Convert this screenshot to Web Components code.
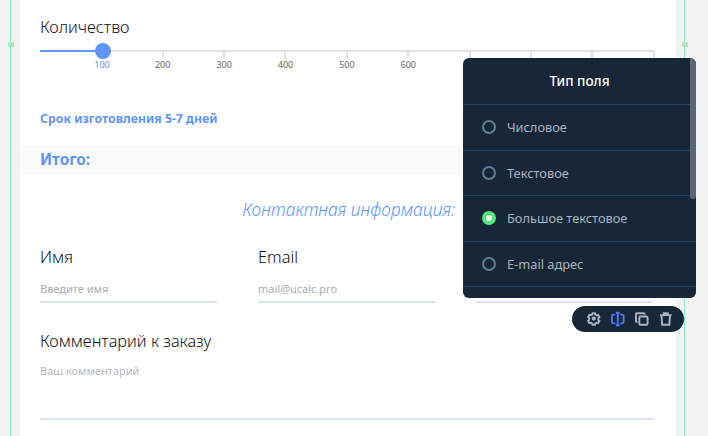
<!DOCTYPE html>
<html lang="ru"><head><meta charset="utf-8"><title>Форма</title>
<style>
html,body{margin:0;padding:0;height:436px;overflow:hidden;background:#f4f4f4}
body{font-family:"Noto Sans","Open Sans",sans-serif;position:relative}
</style></head><body>
<form-canvas></form-canvas>
<script>
function def(name,html,init){
  customElements.define(name,class extends HTMLElement{
    constructor(){super();this.attachShadow({mode:'open'}).innerHTML=typeof html==='function'?html(this):html;}
    connectedCallback(){if(init)init(this)}
  });
}
const F='"Noto Sans","Open Sans",sans-serif';
def('field-label',`<style>:host{display:block;font:300 16.35px/22px ${F};color:#111}</style><slot></slot>`);
def('range-slider',()=>{
  const v=[200,300,400,500,600,'','','',''];
  const ticks=v.map(x=>`<div class="t"><i></i><span>${x}</span></div>`).join('');
  return `<style>
  :host{display:block;height:47px}
  .track{display:flex;height:2px;background:#e2e2e2;position:relative}
  .fill{position:absolute;left:0;top:0;height:2px;width:63px;background:#5f95fb}
  .knob{position:absolute;left:55px;top:-7px;width:16px;height:16px;border-radius:50%;background:#5f95fb}
  .labels{display:flex;padding-left:62.3px}
  .t{width:61.4px;height:20px;text-align:right;position:relative;flex:none}
  .t i{position:absolute;right:0;top:0;width:2px;height:6px;background:#e2e2e2}
  .t span{position:absolute;right:-19px;width:40px;text-align:center;top:7px;font:400 9px/12px ${F};color:#666}
  .first{position:absolute;left:42px;width:40px;text-align:center;top:9px;font:400 9px/12px ${F};color:#5f95fb}
  .wrap{position:relative}
  </style><div class="wrap"><div class="track"><div class="fill"></div><div class="knob"></div></div>
  <span class="first">100</span><div class="labels">${ticks}</div></div>`;
});
def('text-field',el=>`<style>
  :host{display:block}
  .p{display:block;font:400 11px/15px ${F};color:#a9adb2;margin-top:13px;height:20px;border-bottom:2px solid #dce4ef}
  </style><field-label><slot></slot></field-label><div class="p">${el.getAttribute('placeholder')}</div>`);
def('radio-row',el=>`<style>
  :host{display:flex;align-items:center;height:44.5px;padding-left:19px;border-bottom:1px solid #26425c;gap:11px;font:400 12.8px/16px ${F};color:#a9b3bf}
  .r{width:14px;height:14px;box-sizing:border-box;border-radius:50%;border:2px solid #5a7f9f;flex:none}
  :host([checked]) .r{border:none;background:#52e878;position:relative}
  :host([checked]) .r::after{content:"";position:absolute;left:4px;top:4px;width:6px;height:6px;border-radius:50%;background:#fff}
  </style><div class="r"></div><slot></slot>`);
def('type-popup',`<style>
  :host{position:absolute;left:463px;top:58px;width:233px;height:240px;background:#172737;border-radius:6px;overflow:hidden;display:block}
  h3{margin:0;height:47px;box-sizing:border-box;border-bottom:1px solid #26425c;font:500 13.5px/47px ${F};color:#fff;text-align:center}
  .bar{position:absolute;right:0;top:0;width:6px;height:141px;background:#5b6770;border-radius:0 0 3px 3px}
  </style><h3>Тип поля</h3><slot></slot><div class="bar"></div>`);
def('tool-bar',`<style>
  :host{position:absolute;left:572px;top:306px;width:112px;height:26px;border-radius:13px;background:#172737;display:flex;align-items:center;padding-left:14px;gap:8.5px;box-sizing:border-box}
  svg{width:15.5px;height:16px;fill:none;stroke:#a9b4bf;stroke-width:2;flex:none}
  .on{stroke:#4f76f6}
  </style>
  <svg viewBox="0 0 16 16"><path d="M6.7 2.5h2.6l.4 1.5 1.3.7 1.5-.4 1.3 2.3-1.1 1.1v1.6l1.1 1.1-1.3 2.3-1.5-.4-1.3.7-.4 1.5H6.7l-.4-1.5-1.3-.7-1.5.4-1.3-2.3 1.1-1.1V7.6L2.2 6.5l1.3-2.3 1.5.4 1.3-.7z" transform="translate(0 -.5)"/><circle cx="8" cy="7.5" r="1.2"/></svg>
  <svg class="on" viewBox="0 0 16 16"><path d="M8 1.5v13M6 1.5h4M6 14.5h4M5.5 3.5H3.5a1.5 1.5 0 0 0-1.5 1.5v6a1.5 1.5 0 0 0 1.5 1.5h2M10.5 3.5h2a1.5 1.5 0 0 1 1.5 1.5v6a1.5 1.5 0 0 1-1.5 1.5h-2"/></svg>
  <svg viewBox="0 0 16 16"><rect x="5.5" y="5.5" width="8.5" height="8.5" rx="1.3"/><path d="M3.5 11H3a1 1 0 0 1-1-1V3a1 1 0 0 1 1-1h7a1 1 0 0 1 1 1v.5"/></svg>
  <svg viewBox="0 0 16 16"><path d="M2 4h12M6 4V2h4v2M3.6 4l.7 10h7.4l.7-10"/></svg>`);
def('form-card',`<style>
  :host{display:block;margin:0 32px 0 20px;background:#fff;height:436px;padding:16px 21px 0 20px;box-sizing:border-box}
  .time{font:700 12.3px/16px ${F};color:#5f95fb;margin-top:14px}
  .total{margin:18px -21px 0 -20px;padding-left:20px;height:30px;background:#fafafa;font:700 15.3px/29px ${F};color:#5f95fb}
  .contact{font:italic 300 17.4px/24px ${F};color:#5f95fb;text-align:right;margin:22px 200px 0 0;white-space:nowrap}
  .row{display:grid;grid-template-columns:177px 177px 177px;column-gap:41px;margin-top:25px}
  .comment{margin-top:27px}
  .ta{font:400 11px/15px ${F};color:#b4bac2;margin-top:11px;height:55px;border-bottom:2px solid #dce4ef}
  field-label{white-space:nowrap}
  range-slider{margin-top:12px}
  </style>
  <field-label>Количество</field-label>
  <range-slider></range-slider>
  <div class="time">Срок изготовления 5-7 дней</div>
  <div class="total">Итого:</div>
  <div class="contact">Контактная информация:</div>
  <div class="row">
    <text-field placeholder="Введите имя">Имя</text-field>
    <text-field placeholder="mail@ucalc.pro">Email</text-field>
    <text-field placeholder="&nbsp;">&nbsp;</text-field>
  </div>
  <div class="comment"><field-label>Комментарий к заказу</field-label><div class="ta">Ваш комментарий</div></div>`);
def('guide-line',el=>`<style>
  :host{position:absolute;top:0;width:1px;height:436px;background:#90ebb8;display:block}
  i{position:absolute;left:-2.5px;top:42px;width:6px;height:5px;background:#a5ecc4}
  </style><i></i>`);
def('form-canvas',`<style>:host{display:block;position:relative;height:436px}</style>
  <form-card></form-card>
  <guide-line style="left:10px"></guide-line><guide-line style="left:684px"></guide-line>
  <type-popup>
    <radio-row>Числовое</radio-row><radio-row>Текстовое</radio-row>
    <radio-row checked>Большое текстовое</radio-row><radio-row>E-mail адрес</radio-row>
  </type-popup>
  <tool-bar></tool-bar>`);
</script></body></html>
